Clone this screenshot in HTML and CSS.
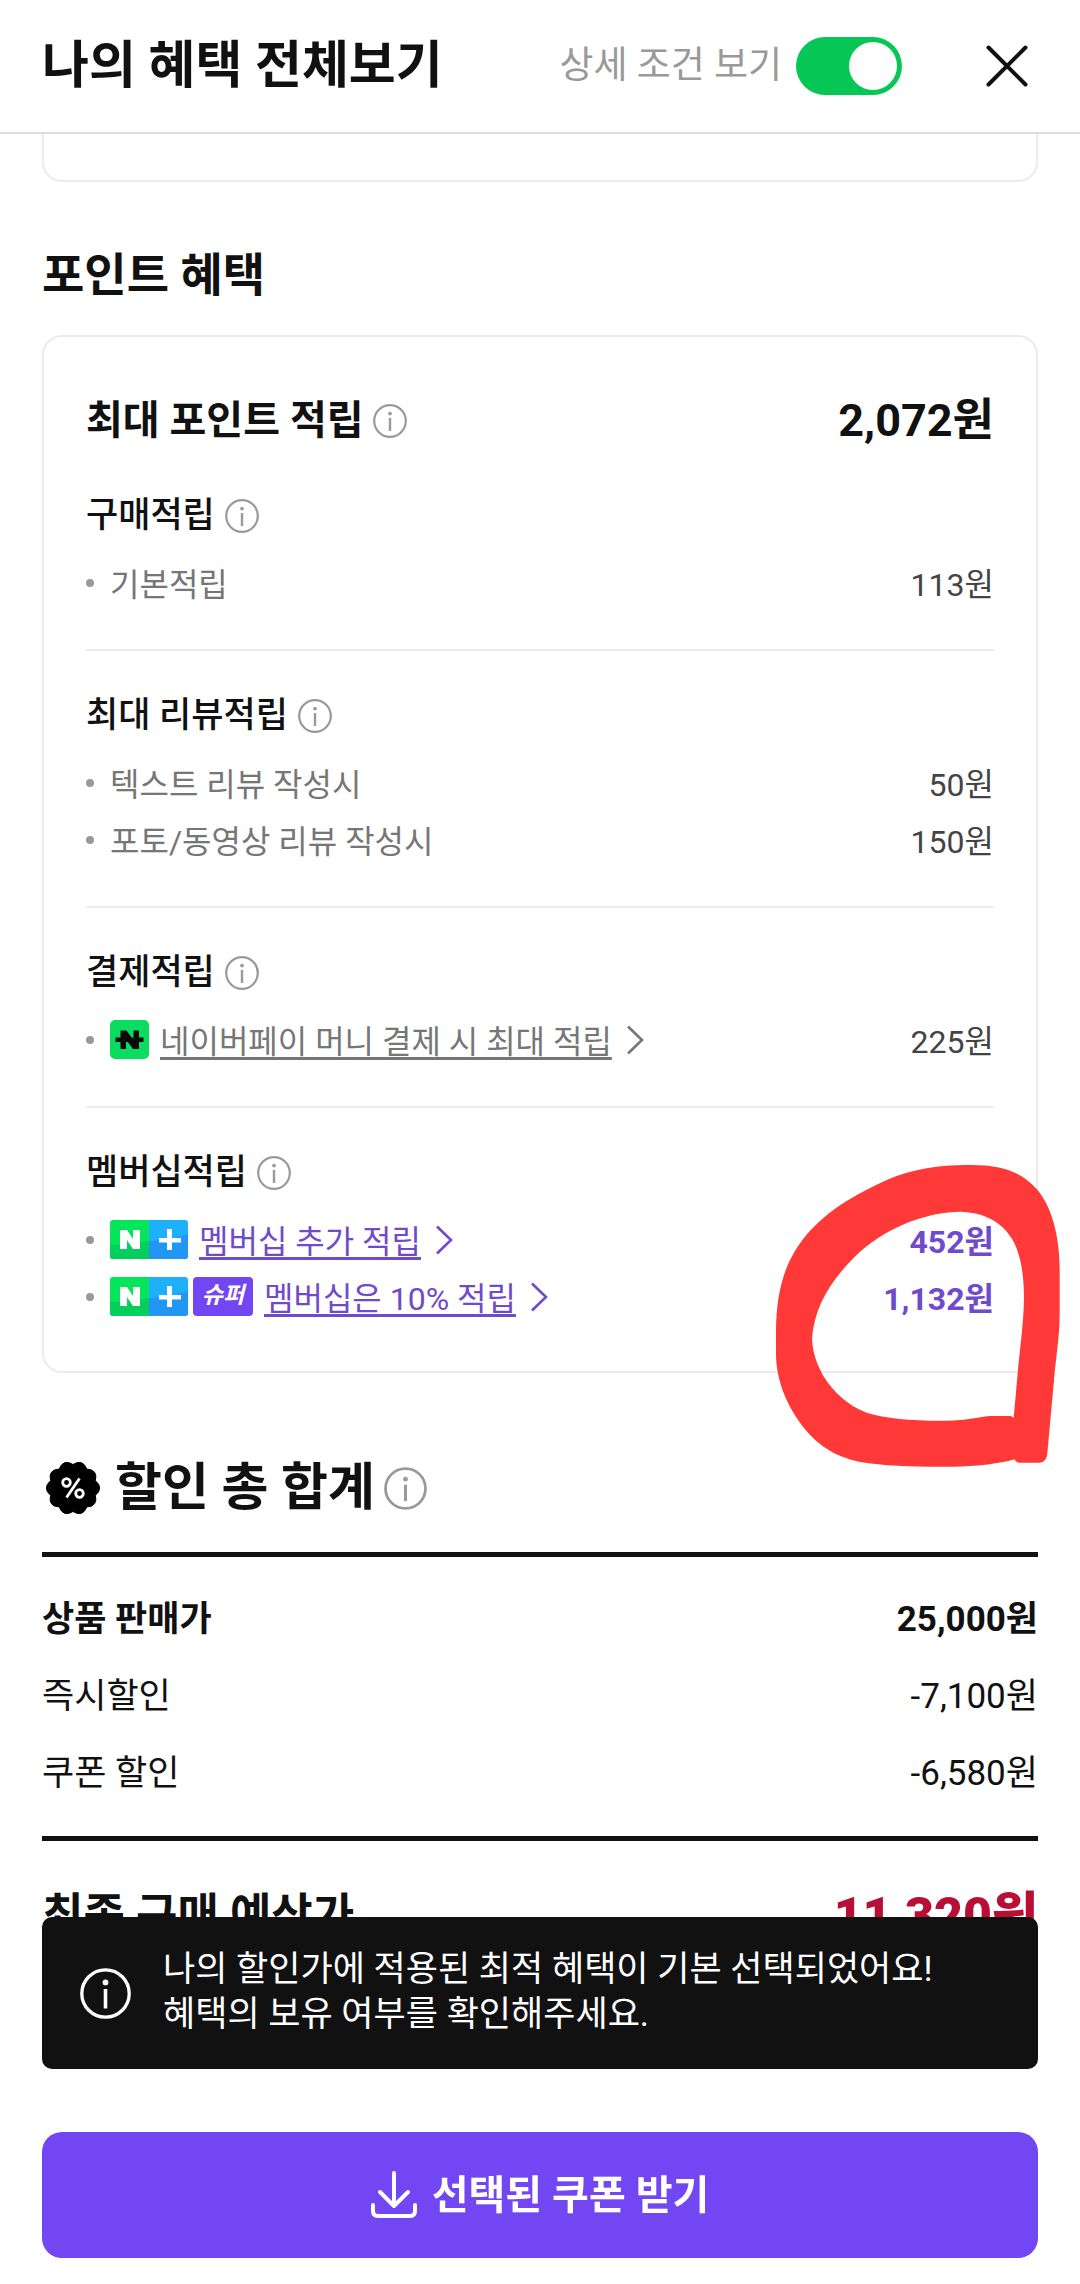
FILE: index.html
```html
<!DOCTYPE html>
<html lang="ko">
<head>
<meta charset="utf-8">
<meta name="viewport" content="width=device-width, initial-scale=1">
<title>나의 혜택 전체보기</title>
<link rel="stylesheet" href="styles.css">
</head>
<body>
<svg class="defs" aria-hidden="true">
  <symbol id="info" viewBox="0 0 34 34">
    <circle cx="17" cy="17" r="15.8" fill="none" stroke="currentColor" stroke-width="2.2"/>
    <circle cx="17" cy="9.6" r="1.9" fill="currentColor"/>
    <path d="M17 14v13" stroke="currentColor" stroke-width="2.4" fill="none"/>
  </symbol>
  <symbol id="chevron" viewBox="0 0 18 30">
    <path d="M2 1.500L16 15L2 28.500" fill="none" stroke="currentColor" stroke-width="2.600"/>
  </symbol>
  <symbol id="nplus" viewBox="0 0 78 39">
    <path d="M3 0H39V39H3a3 3 0 0 1-3-3V3a3 3 0 0 1 3-3z" fill="#03e65a"/>
    <path d="M0 25Q20 25 39 21V39H3a3 3 0 0 1-3-3z" fill="#05cf5c"/>
    <path d="M39 0H75a3 3 0 0 1 3 3V36a3 3 0 0 1-3 3H39z" fill="#1fb0fb"/>
    <path d="M39 21Q58 21 78 14V36a3 3 0 0 1-3 3H39z" fill="#2196f3"/>
    <path d="M10 29V10h7l6 9v-9h7v19h-7l-6-9v9z" fill="#fff"/>
    <path d="M57 9h5v9h9v4.500h-9V30h-5v-7.500h-8V18h8z" fill="#fff"/>
  </symbol>
</svg>

<header class="header">
  <h1 class="header-title">나의 혜택 전체보기</h1>
  <label class="switch-label" for="detail">상세 조건 보기</label>
  <input class="switch" id="detail" type="checkbox" role="switch" checked>
  <button class="close" type="button" aria-label="닫기">
    <svg viewBox="0 0 42 42"><path d="M2.500 2.500L39.500 39.500M39.500 2.500L2.500 39.500" fill="none" stroke="#111" stroke-width="4" stroke-linecap="round"/></svg>
  </button>
</header>

<main class="main">
  <div class="card card-tail"></div>

  <h2 class="section-title">포인트 혜택</h2>
  <section class="card points">
    <div class="points-total">
      <h3 class="total-name">최대 포인트 적립 <svg class="info"><use href="#info"/></svg></h3>
      <strong class="total-value">2,072원</strong>
    </div>

    <div class="group">
      <h4 class="group-title">구매적립 <svg class="info"><use href="#info"/></svg></h4>
      <ul class="rows">
        <li class="row"><span class="name">기본적립</span><span class="value">113원</span></li>
      </ul>
    </div>
    <div class="group">
      <h4 class="group-title">최대 리뷰적립 <svg class="info"><use href="#info"/></svg></h4>
      <ul class="rows">
        <li class="row"><span class="name">텍스트 리뷰 작성시</span><span class="value">50원</span></li>
        <li class="row"><span class="name">포토/동영상 리뷰 작성시</span><span class="value">150원</span></li>
      </ul>
    </div>
    <div class="group">
      <h4 class="group-title">결제적립 <svg class="info"><use href="#info"/></svg></h4>
      <ul class="rows">
        <li class="row">
          <svg class="pay" viewBox="0 0 39 39"><rect width="39" height="39" rx="5" fill="#09dc60"/><path d="M10.500 29V10.500h6l7 9.500v-9.500h5.500V29h-6l-7-9.500V29zM5.500 17.500h28v4.500h-28z" fill="#0a0a0a"/></svg>
          <a class="link" href="#pay">네이버페이 머니 결제 시 최대 적립</a>
          <svg class="chevron"><use href="#chevron"/></svg>
          <span class="value">225원</span>
        </li>
      </ul>
    </div>
    <div class="group">
      <h4 class="group-title">멤버십적립 <svg class="info"><use href="#info"/></svg></h4>
      <ul class="rows">
        <li class="row member">
          <svg class="nplus"><use href="#nplus"/></svg>
          <a class="link" href="#member">멤버십 추가 적립</a>
          <svg class="chevron"><use href="#chevron"/></svg>
          <span class="value">452원</span>
        </li>
        <li class="row member">
          <svg class="nplus"><use href="#nplus"/></svg>
          <span class="super">슈퍼</span>
          <a class="link" href="#super">멤버십은 10% 적립</a>
          <svg class="chevron"><use href="#chevron"/></svg>
          <span class="value">1,132원</span>
        </li>
      </ul>
    </div>

    <svg class="marker" viewBox="0 0 1140 1140" aria-hidden="true">
      <path fill="#ff3838" fill-rule="evenodd" d="M228 640C228 500 260 410 330 332C400 258 480 217 560 180C640 146 720 135 800 135C900 133 960 152 1010 207C1060 265 1079 360 1079 450V580C1079 650 1068 710 1062 780L1042 1000Q1040 1028 1018 1028H960Q948 1028 943 1018C900 1032 820 1040 760 1040C660 1041 560 1039 480 1026C400 1010 350 970 315 928C260 860 228 780 228 700ZM336 655C344 560 390 480 480 395C570 315 690 275 780 275C850 277 905 305 935 355C965 405 972 470 972 540C970 620 958 700 953 760L941 893L932 888H870C830 892 800 902 740 902C640 903 560 896 500 878C440 855 400 815 370 768C350 730 338 700 336 655Z"/>
    </svg>
  </section>

  <section class="summary">
    <h2 class="summary-title">
      <svg class="seal" viewBox="-27 -27 54 54"><path d="M22.400-7.300Q31 0 22.400 7.300Q25.100 18.200 13.800 19Q9.600 29.500 0 23.500Q-9.600 29.500-13.800 19Q-25.100 18.200-22.400 7.300Q-31 0-22.400-7.300Q-25.100-18.200-13.800-19Q-9.600-29.500 0-23.500Q9.600-29.500 13.800-19Q25.100-18.200 22.400-7.300Z" stroke="#000" stroke-linejoin="round"/><g fill="none" stroke="#fff" stroke-width="2.800"><circle cx="-6.500" cy="-5.500" r="3.800"/><circle cx="6.500" cy="5.500" r="3.800"/><path d="M6.500-9.500L-6.500 9.500"/></g></svg>
      <span>할인 총 합계</span>
      <svg class="info info-large"><use href="#info"/></svg>
    </h2>
    <dl class="bill">
      <div class="bill-row strong"><dt>상품 판매가</dt><dd>25,000원</dd></div>
      <div class="bill-row"><dt>즉시할인</dt><dd>-7,100원</dd></div>
      <div class="bill-row"><dt>쿠폰 할인</dt><dd>-6,580원</dd></div>
    </dl>
    <div class="final"><span>최종 구매 예상가</span><strong class="final-value">11,320원</strong></div>
  </section>
</main>

<footer class="footer">
  <div class="toast" role="status">
    <svg class="toast-icon"><use href="#info"/></svg>
    <p class="toast-text">나의 할인가에 적용된 최적 혜택이 기본 선택되었어요!<br>혜택의 보유 여부를 확인해주세요.</p>
  </div>
  <button class="cta" type="button">
    <svg class="download" viewBox="0 0 46 48"><path d="M23 2V33M9 21L23 35L37 21M2 34V40Q2 45 7 45H39Q44 45 44 40V34" fill="none" stroke="#fff" stroke-width="4" stroke-linecap="round" stroke-linejoin="round"/></svg>
    <span class="cta-text">선택된 쿠폰 받기</span>
  </button>
</footer>
</body>
</html>
```

FILE: styles.css
```css
* {
  box-sizing: border-box;
}

body,
h1,
h2,
h3,
h4,
p,
ul,
dl,
dd {
  margin: 0;
  padding: 0;
}

body {
  background: #fff;
  color: #111;
  font-family: Roboto, "Noto Sans CJK KR", sans-serif;
}

button {
  border: 0;
  padding: 0;
  background: none;
  font-family: inherit;
}

.defs {
  display: none;
}

/* Header */
.header {
  position: sticky;
  top: 0;
  z-index: 2;
  display: flex;
  align-items: center;
  height: 134px;
  padding: 0 52px 0 42px;
  border-bottom: 2px solid #ddd;
  background: #fff;
}

.header-title {
  flex: 1;
  font-size: 51px;
  font-weight: 700;
  line-height: 60px;
}

.switch-label {
  margin-right: 14px;
  color: #999;
  font-size: 37px;
  line-height: 50px;
}

.switch {
  appearance: none;
  display: flex;
  align-items: center;
  justify-content: flex-end;
  width: 106px;
  height: 58px;
  margin: 0 84px 0 0;
  padding: 0 5px;
  border-radius: 29px;
  background: #06c755;
}

.switch::before {
  content: "";
  width: 48px;
  height: 48px;
  border-radius: 50%;
  background: #fff;
}

.close {
  width: 42px;
  height: 42px;
}

.close svg {
  display: block;
}

/* Point benefits */
.main {
  padding: 0 42px;
}

.card {
  border: 2px solid #ebebeb;
  border-radius: 20px;
}

.card-tail {
  height: 48px;
  border-top: 0;
  border-radius: 0 0 20px 20px;
}

.section-title {
  margin: 63px 0 30px;
  font-size: 46px;
  line-height: 60px;
}

.points {
  position: relative;
  padding: 54px 42px 8px;
}

.points-total {
  display: flex;
  justify-content: space-between;
  align-items: center;
  margin-bottom: 40px;
  line-height: 60px;
}

.total-name,
.group-title {
  display: flex;
  align-items: center;
  gap: 10px;
}

.total-name {
  font-size: 40px;
}

.total-value {
  font-size: 45px;
}

.info {
  width: 34px;
  height: 34px;
  color: #999;
}

.group {
  padding-bottom: 38px;
}

.group + .group {
  padding-top: 40px;
  border-top: 2px solid #ebebeb;
}

.group-title {
  margin-bottom: 13px;
  font-size: 35px;
  font-weight: 500;
  line-height: 50px;
}

.rows {
  list-style: none;
}

.row {
  display: flex;
  align-items: center;
  height: 57px;
  color: #767676;
  font-size: 32px;
}

.row::before {
  content: "";
  width: 8px;
  height: 8px;
  margin-right: 16px;
  border-radius: 50%;
  background: #999;
}

.name,
.value,
.link {
  padding-bottom: 2px;
}

.value {
  margin-left: auto;
  color: #444;
}

.link {
  margin: 0 14px 0 11px;
  color: inherit;
  text-decoration-thickness: 3px;
  text-underline-offset: 4px;
  text-decoration-skip-ink: none;
}

.chevron {
  width: 18px;
  height: 30px;
}

.pay {
  width: 39px;
  height: 39px;
}

.nplus {
  width: 78px;
  height: 39px;
}

.member {
  color: #6f4bcb;
}

.member .value {
  color: inherit;
  font-weight: 700;
}

.super {
  width: 60px;
  margin-left: 5px;
  padding-bottom: 2px;
  border-radius: 4px;
  background: #7346f3;
  color: #fff;
  font-size: 23px;
  font-style: italic;
  font-weight: 700;
  line-height: 37px;
  text-align: center;
}

/* Hand-drawn highlight over the membership amounts */
.marker {
  position: absolute;
  top: 783px;
  right: -44px;
  width: 380px;
  height: 380px;
  pointer-events: none;
}

/* Discount summary */
.summary-title {
  display: flex;
  align-items: center;
  gap: 9px;
  margin-top: 80px;
  padding-left: 4px;
  font-size: 51px;
  line-height: 70px;
}

.seal {
  width: 54px;
  height: 54px;
  margin-right: 6px;
}

.info-large {
  width: 43px;
  height: 43px;
}

.bill {
  margin-top: 29px;
  padding: 24px 0;
  border-top: 5px solid #111;
  border-bottom: 5px solid #111;
}

.bill-row {
  display: flex;
  justify-content: space-between;
  font-size: 35px;
  line-height: 77px;
}

.strong {
  font-weight: 700;
}

.final {
  display: flex;
  justify-content: space-between;
  align-items: center;
  padding: 40px 0;
  font-size: 45px;
  font-weight: 700;
  line-height: 70px;
}

.final-value {
  color: #b90f35;
  font-size: 50px;
}

/* Notice and action */
.footer {
  position: fixed;
  right: 0;
  bottom: 0;
  left: 0;
  padding: 0 42px 26px;
}

.toast {
  display: flex;
  align-items: center;
  gap: 32px;
  min-height: 152px;
  padding: 0 38px;
  border-radius: 10px;
  background: #111;
  color: #fff;
}

.toast-icon {
  flex: none;
  width: 51px;
  height: 51px;
}

.toast-text {
  padding-bottom: 2px;
  font-size: 35px;
  line-height: 45px;
}

.cta {
  display: flex;
  align-items: center;
  justify-content: center;
  gap: 15px;
  width: 100%;
  height: 126px;
  margin-top: 63px;
  border-radius: 20px;
  background: #7346f3;
  color: #fff;
  font-size: 40px;
  font-weight: 700;
}

.cta-text {
  padding-bottom: 6px;
}

.download {
  width: 46px;
  height: 48px;
}
```
